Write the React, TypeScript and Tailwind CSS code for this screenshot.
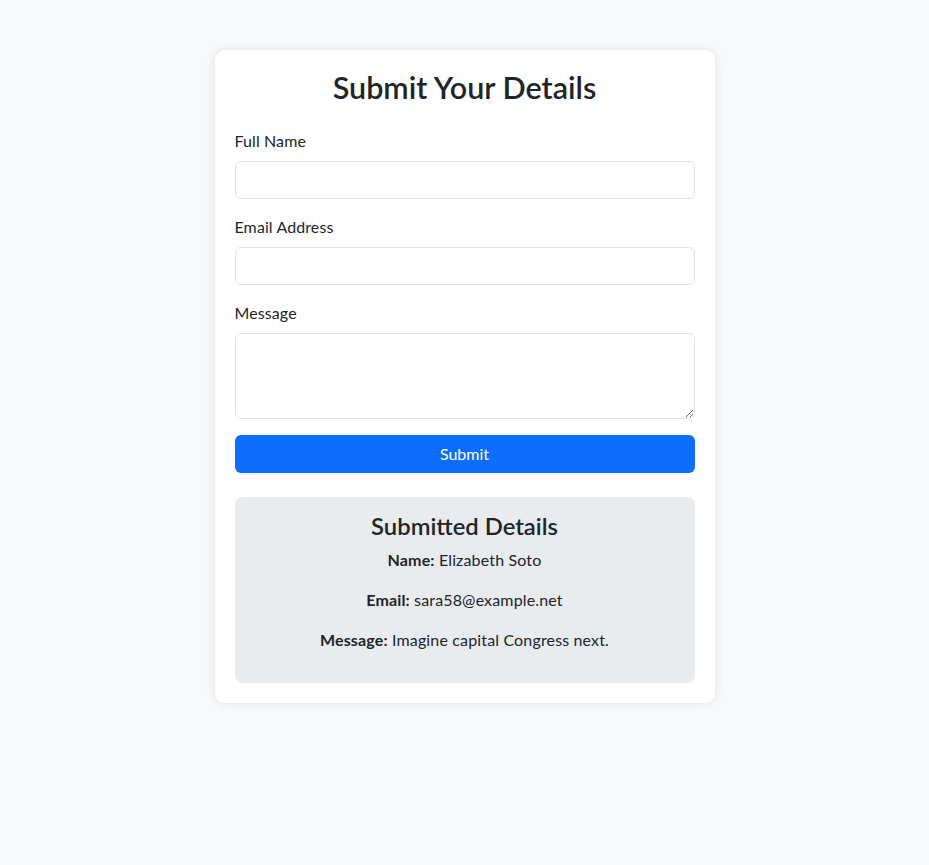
import React from "react";

export default function App() {
  return (
    <div
      className="min-h-[865px] bg-[#f8f9fa] pt-[50px] text-[#212529]"
      style={{ fontFamily: '"Segoe UI", Lato, "Noto Sans", sans-serif' }}
    >
      <div className="mx-auto w-[500px] rounded-[10px] bg-white p-5 shadow-[0_0_10px_rgba(0,0,0,0.1)]">
        <h2 className="mb-6 text-center text-[30.5px] font-semibold leading-[35px]">
          Submit Your Details
        </h2>
        <form onSubmit={(e) => e.preventDefault()}>
          <div className="mb-4">
            <label className="mb-2 block text-base leading-6 tracking-[0.1px]">Full Name</label>
            <input
              type="text"
              className="block h-[38px] w-full rounded-[6px] border border-[#dee2e6] bg-white px-3 text-base outline-none"
            />
          </div>
          <div className="mb-4">
            <label className="mb-2 block text-base leading-6 tracking-[0.1px]">Email Address</label>
            <input
              type="email"
              className="block h-[38px] w-full rounded-[6px] border border-[#dee2e6] bg-white px-3 text-base outline-none"
            />
          </div>
          <div className="mb-4">
            <label className="mb-2 block text-base leading-6 tracking-[0.1px]">Message</label>
            <textarea
              rows={3}
              className="block h-[86px] w-full rounded-[6px] border border-[#dee2e6] bg-white px-3 py-1.5 text-base leading-6 outline-none"
            />
          </div>
          <button
            type="submit"
            className="block h-[38px] w-full rounded-[6px] bg-[#0d6efd] text-base leading-6 text-white"
          >
            Submit
          </button>
        </form>
        <div className="mt-6 rounded-[8px] bg-[#e9ecef] p-[15px] text-center">
          <h4 className="mb-2 text-[23.8px] font-semibold leading-[28px]">Submitted Details</h4>
          <p className="mb-4 text-base leading-6 tracking-[0.15px]">
            <strong className="font-bold">Name:</strong> Elizabeth Soto
          </p>
          <p className="mb-4 text-base leading-6 tracking-[0.15px]">
            <strong className="font-bold">Email:</strong> sara58@example.net
          </p>
          <p className="mb-4 text-base leading-6 tracking-[0.15px]">
            <strong className="font-bold">Message:</strong> Imagine capital Congress next.
          </p>
        </div>
      </div>
    </div>
  );
}
